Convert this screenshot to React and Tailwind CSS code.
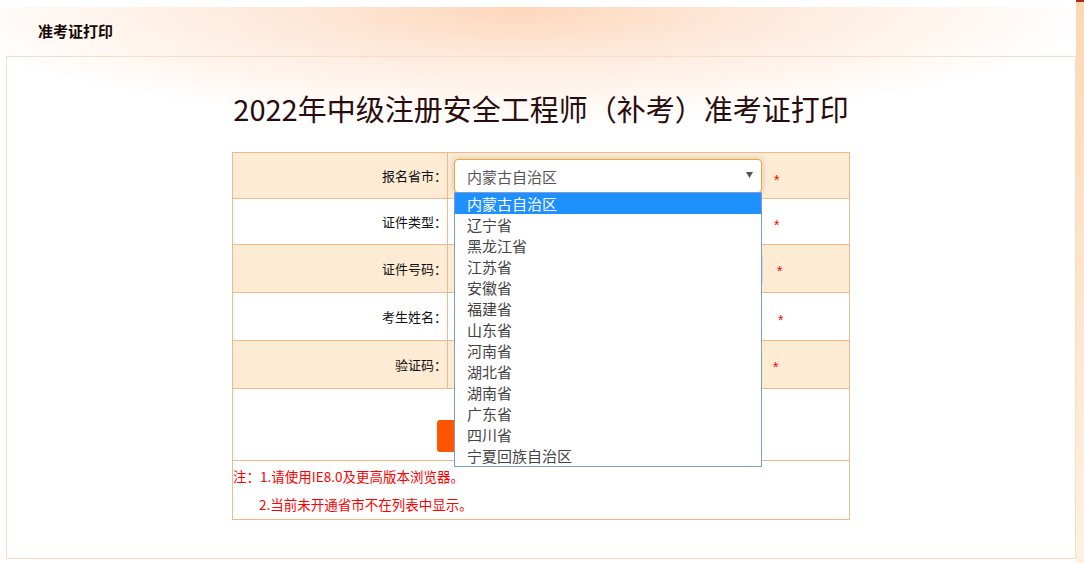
import React from 'react'

const PROVINCES = [
  '内蒙古自治区', '辽宁省', '黑龙江省', '江苏省', '安徽省', '福建省', '山东省',
  '河南省', '湖北省', '湖南省', '广东省', '四川省', '宁夏回族自治区',
]

function Star({ className = '' }) {
  return (
    <span className={'font-["Liberation_Sans",sans-serif] text-[14px] leading-none text-[#ff0000] ' + className}>*</span>
  )
}

function Row({ label, peach, height, children }) {
  return (
    <div className={'flex border-b border-[#efb88f] ' + height + (peach ? ' bg-[#fdebd3]' : ' bg-white')}>
      <div className="w-[215px] shrink-0 border-r border-[#efb88f] flex items-center justify-end text-[13px] text-[#111]">
        {label}
      </div>
      <div className="flex-1 flex items-center pl-[6px]">{children}</div>
    </div>
  )
}

export default function App() {
  return (
    <div className="w-[1084px] h-[563px] flex bg-white overflow-hidden font-['Noto_Sans_CJK_SC',sans-serif]">
      <div className="flex-1 flex flex-col pt-[7px]">
        <div className="flex-1 flex flex-col bg-[radial-gradient(ellipse_580px_115px_at_48%_0px,#fdd7bb_0%,#feeadc_45%,#ffffff_100%)]">
          {/* header */}
          <div className="h-[49px] flex items-center pl-[38px] text-[15px] font-bold text-[#140800]">
            准考证打印
          </div>

          {/* panel */}
          <div className="ml-[6px] h-[503px] border border-[#f9dcc5] flex flex-col items-center">
            <h1 className="mt-[31px] h-[40px] leading-[40px] text-[29px] text-[#2a0c0c] font-normal">
              2022年中级注册安全工程师（补考）准考证打印
            </h1>

            <div className="mt-[24px] w-[618px] border-x border-t border-[#efb88f]">
              <Row label="报名省市：" peach height="h-[46px]">
                <div className="relative z-10">
                  <div className="w-[308px] h-[34px] rounded-[4px] border border-[#f5a43a] bg-white shadow-[0_0_6px_rgba(0,0,0,0.18)] flex items-center justify-between pl-[12px] pr-[8px] pt-[3px]">
                    <span className="text-[15px] text-[#555]">内蒙古自治区</span>
                    <svg width="7" height="6" viewBox="0 0 7 6" className="-mt-[4px]">
                      <polygon points="0,0 7,0 3.5,6" fill="#555" />
                    </svg>
                  </div>
                  <ul className="absolute left-0 top-[33px] w-[308px] border border-[#7d9dd6] bg-white">
                    {PROVINCES.map((p, i) => (
                      <li
                        key={p}
                        className={
                          'h-[21px] leading-[21px] pl-[12px] text-[15px] ' +
                          (i === 0 ? 'bg-[#1e90ff] text-white' : 'text-[#444]')
                        }
                      >
                        {p}
                      </li>
                    ))}
                  </ul>
                </div>
                <Star className="ml-[12px] mt-[8px]" />
              </Row>

              <Row label="证件类型：" height="h-[46px]">
                <div className="w-[308px] h-[34px] rounded-[4px] border border-[#ccc] bg-white" />
                <Star className="ml-[12px] mt-[7px]" />
              </Row>

              <Row label="证件号码：" peach height="h-[48px]">
                <div className="w-[309px] h-[34px] rounded-[4px] border border-[#d6d6d6] bg-white" />
                <Star className="ml-[14px] mt-[4px]" />
              </Row>

              <Row label="考生姓名：" height="h-[48px]">
                <div className="w-[308px] h-[34px] rounded-[4px] border border-[#d6d6d6] bg-white" />
                <Star className="ml-[16px] mt-[6px]" />
              </Row>

              <Row label="验证码：" peach height="h-[48px]">
                <div className="w-[304px] h-[34px] rounded-[4px] border border-[#d6d6d6] bg-white" />
                <Star className="ml-[15px] mt-[5px]" />
              </Row>

              <div className="h-[72px] border-b border-[#efb88f] bg-white pt-[31px] pl-[204px]">
                <button aria-label="打印准考证" className="w-[208px] h-[32px] rounded-[3px] bg-[#ff5500]" />
              </div>

              <div className="h-[59px] border-b border-[#efb88f] bg-white pt-[1px] text-[13.5px] leading-[28px] text-[#ff0000]">
                <p>注：1.请使用IE8.0及更高版本浏览器。</p>
                <p className="pl-[26px]">2.当前未开通省市不在列表中显示。</p>
              </div>
            </div>
          </div>
        </div>
      </div>

      {/* right strip */}
      <div className="w-[8px] flex flex-col bg-[linear-gradient(to_bottom,#fcd8b4,#fef1e4)]">
        <div className="h-[2px] bg-[#b8261e]" />
      </div>
    </div>
  )
}
